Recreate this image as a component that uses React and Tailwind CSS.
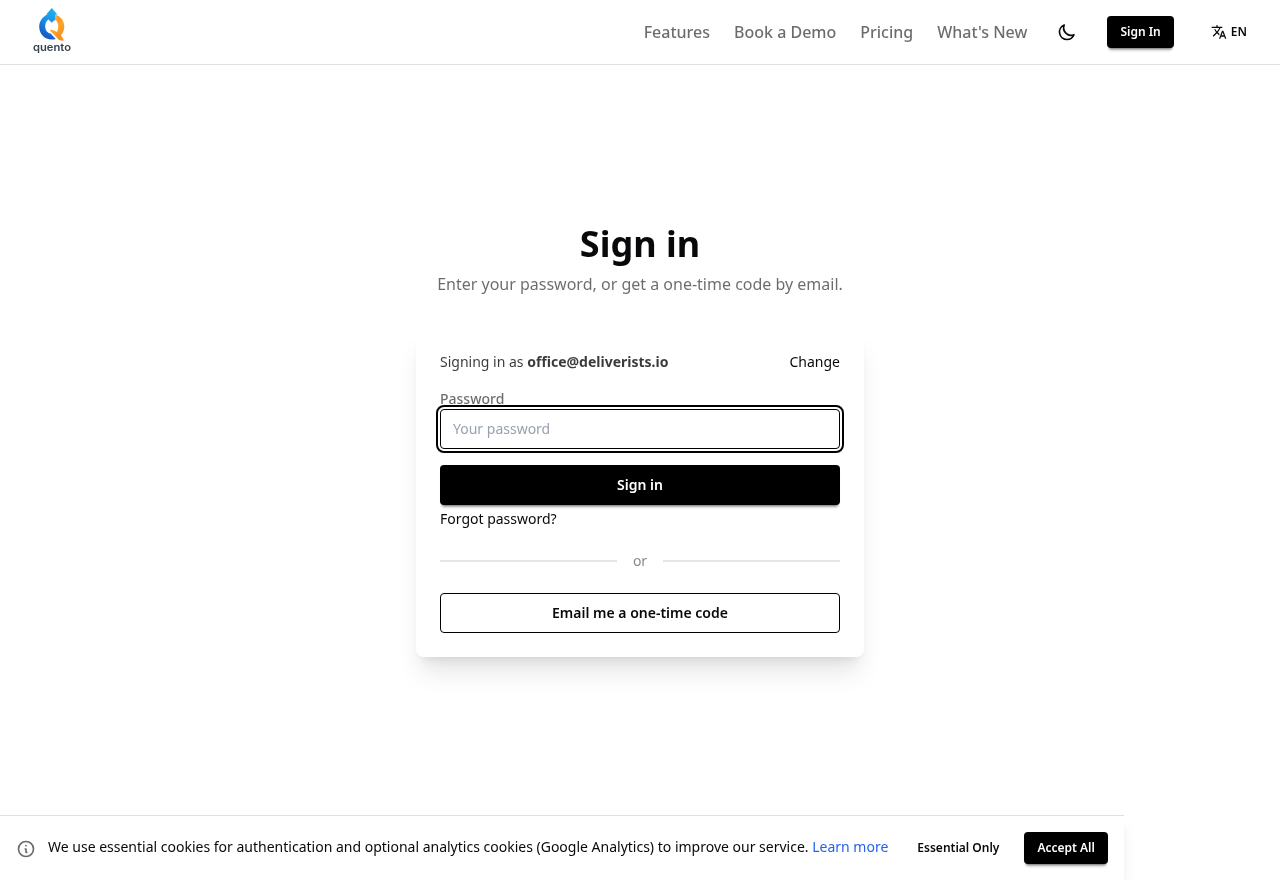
import { HiOutlineMoon, HiOutlineInformationCircle } from 'react-icons/hi';
import { MdTranslate } from 'react-icons/md';

const navLinks = [
  { label: 'Features', href: '#features' },
  { label: 'Book a Demo', href: '#demo' },
  { label: 'Pricing', href: '#pricing' },
  { label: "What's New", href: '#whats-new' },
];

const primaryBtn =
  'inline-flex items-center justify-center rounded-sm bg-black font-semibold text-white cursor-pointer shadow-[0_3px_2px_-2px_rgba(0,0,0,0.3),0_4px_3px_-2px_rgba(0,0,0,0.3)]';

function Logo() {
  return (
    <svg viewBox="0 0 48 48" className="size-12" role="img" aria-label="quento">
      <defs>
        <linearGradient id="blue" x1="0.7" y1="0" x2="0.3" y2="1">
          <stop offset="0" stopColor="#1cb4f0" />
          <stop offset="0.45" stopColor="#1c8fe6" />
          <stop offset="1" stopColor="#1450bd" />
        </linearGradient>
        <linearGradient id="orange" x1="0" y1="0" x2="0.6" y2="1">
          <stop offset="0" stopColor="#f3841c" />
          <stop offset="0.6" stopColor="#fca62c" />
          <stop offset="1" stopColor="#fb8c20" />
        </linearGradient>
      </defs>
      {/* left half, ends in the up arrow */}
      <path
        d="M23.8 0L29.4 6.4H27.6V12.6L26.4 12.2L23.8 14.8L20.4 11.6L18.6 13.2C17.6 14.8 17.2 16.6 17.2 18.6C17.2 22.4 19.4 25 22.6 25.6L27.8 31C26.6 31.4 25.3 31.6 23.8 31.6C16.6 31.6 11.2 26 11.2 18.8C11.2 13 14.6 8.4 19.8 6.4H18.2Z"
        fill="url(#blue)"
      />
      {/* right half of the ring with the tail */}
      <path
        d="M28.2 7C33 8.8 36.3 13 36.3 18.6C36.3 22 35 25 33 27.3L36 32.6C33 32.8 31.4 32.4 30 31L21.8 22.2C24 21.4 26.4 22.2 28.8 24C29.8 22.4 30.2 20.6 30.2 18.6C30.2 16.4 29.6 14.2 28.2 12.6Z"
        fill="url(#orange)"
      />
      <text
        x="24"
        y="42.6"
        textAnchor="middle"
        textLength="38"
        lengthAdjust="spacingAndGlyphs"
        className="fill-[#39424e] font-['Inter',sans-serif] text-[10.5px] font-semibold"
      >
        quento
      </text>
    </svg>
  );
}

function Header() {
  return (
    <header className="flex h-[65px] items-center justify-between border-b border-[#e0e0e0] pr-5 pl-7">
      <a href="#home">
        <Logo />
      </a>
      <div className="flex items-center gap-6">
        <nav className="flex items-center gap-6">
          {navLinks.map((link) => (
            <a key={link.label} href={link.href} className="font-medium text-[#09090b]/60">
              {link.label}
            </a>
          ))}
        </nav>
        <button className="flex size-8 cursor-pointer items-center justify-center" aria-label="Toggle theme">
          <HiOutlineMoon size={20} />
        </button>
        <button className={`${primaryBtn} h-8 px-[13px] text-xs`}>Sign In</button>
        <button className="flex h-8 cursor-pointer items-center gap-1 px-[13px] text-xs font-semibold">
          <MdTranslate size={16} />
          EN
        </button>
      </div>
    </header>
  );
}

function SignInCard() {
  return (
    <div className="w-[448px] rounded-lg bg-white p-6 text-sm shadow-xl">
      <div className="flex items-center justify-between">
        <p className="text-[#09090b]/80">
          Signing in as <strong className="font-bold">office@deliverists.io</strong>
        </p>
        <button className="cursor-pointer">Change</button>
      </div>

      <form className="mt-[17px]" onSubmit={(e) => e.preventDefault()}>
        <label htmlFor="password" className="block font-medium text-[#09090b]/60">
          Password
        </label>
        <input
          id="password"
          type="password"
          placeholder="Your password"
          className="block h-10 w-full rounded-sm border border-black px-3 pb-0.5 outline-2 outline-offset-2 outline-black placeholder:text-[#99a1af]"
        />
        <button type="submit" className={`${primaryBtn} mt-4 h-10 w-full`}>
          Sign in
        </button>
      </form>
      <a href="#forgot" className="mt-1 block w-fit">
        Forgot password?
      </a>

      <div className="my-[22px] flex h-5 items-center gap-4 text-[#09090b]/50">
        <span className="h-0.5 flex-1 bg-[#e6e6e6]" />
        or
        <span className="h-0.5 flex-1 bg-[#e6e6e6]" />
      </div>

      <button className="h-10 w-full cursor-pointer rounded-sm border border-black font-semibold">
        Email me a one-time code
      </button>
    </div>
  );
}

function CookieBar() {
  return (
    <div className="flex h-[65px] w-fit items-center gap-4 border-t border-[#e0e0e0] bg-white px-4 shadow-lg">
      <div className="flex items-start gap-3">
        <HiOutlineInformationCircle size={20} className="mt-0.5 shrink-0 text-[#09090b]/60" />
        <p className="text-sm whitespace-nowrap">
          We use essential cookies for authentication and optional analytics cookies (Google Analytics) to improve our
          service.{' '}
          <a href="#cookies" className="text-[#2563eb]">
            Learn more
          </a>
        </p>
      </div>
      <div className="flex items-center gap-3">
        <button className="h-8 cursor-pointer px-[13px] text-xs font-semibold whitespace-nowrap">Essential Only</button>
        <button className={`${primaryBtn} h-8 px-[13px] text-xs whitespace-nowrap`}>Accept All</button>
      </div>
    </div>
  );
}

export default function App() {
  return (
    <div className="flex h-screen flex-col overflow-hidden bg-white font-['Noto_Sans',sans-serif] text-[#09090b] will-change-transform">
      <Header />
      <main className="flex flex-1 flex-col items-center pt-[159px]">
        <h1 className="text-4xl font-bold">Sign in</h1>
        <p className="mt-2 mb-8 text-[#09090b]/60">Enter your password, or get a one-time code by email.</p>
        <SignInCard />
      </main>
      <CookieBar />
    </div>
  );
}
